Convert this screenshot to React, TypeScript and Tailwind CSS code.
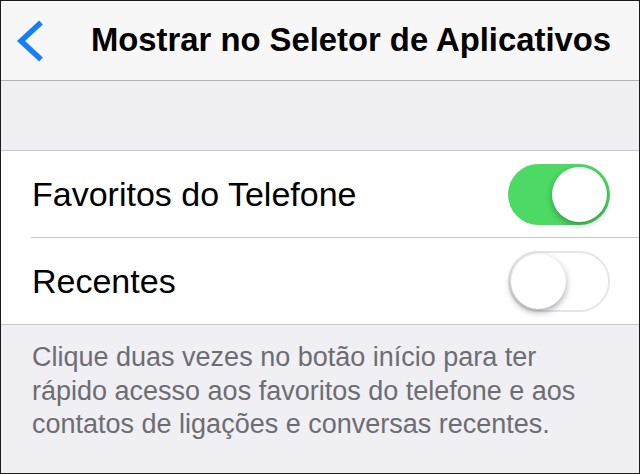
import React from "react";

function Toggle({ on }: { on: boolean }) {
  if (on) {
    return (
      <div className="relative h-[61px] w-[102px] rounded-full bg-[#4cd964]">
        <div className="absolute right-[3px] top-[3px] h-[55px] w-[55px] rounded-full bg-white shadow-[0_3px_6px_rgba(0,0,0,0.3)]" />
      </div>
    );
  }
  return (
    <div className="relative h-[61px] w-[102px] rounded-full border-2 border-[#e5e5ea] bg-white">
      <div className="absolute left-[1px] top-[1px] h-[55px] w-[55px] rounded-full bg-white shadow-[0_3px_7px_rgba(0,0,0,0.35)]" />
    </div>
  );
}

export default function App() {
  return (
    <div
      className="box-border flex h-[474px] w-[640px] flex-col overflow-hidden border border-[#1b1b1b] bg-[#efeff4]"
      style={{ fontFamily: '"Liberation Sans", Arial, sans-serif' }}
    >
      {/* nav bar */}
      <div className="flex h-[80px] shrink-0 items-center border-b border-[#b2b2b2] bg-[#f7f7f7] pl-[14px]">
        <svg width="30" height="44" viewBox="0 0 30 44" className="shrink-0">
          <path d="M26 3.5 L6 22 L26 40.5" fill="none" stroke="#157efb" strokeWidth="5.5" />
        </svg>
        <h1 className="ml-[46px] text-[32.8px] font-bold leading-none text-black">
          Mostrar no Seletor de Aplicativos
        </h1>
      </div>

      <div className="h-[70px] shrink-0 border-b border-[#c8c7cc]" />

      {/* cells */}
      <div className="shrink-0 border-b border-[#c8c7cc] bg-white">
        <div className="flex h-[86px] items-center justify-between pl-[31px] pr-[29px]">
          <span className="text-[34px] leading-none text-black">Favoritos do Telefone</span>
          <Toggle on />
        </div>
        <div className="ml-[30px] h-px bg-[#c8c7cc]" />
        <div className="flex h-[86px] items-center justify-between pl-[31px] pr-[29px]">
          <span className="text-[34px] leading-none text-black">Recentes</span>
          <Toggle on={false} />
        </div>
      </div>

      <p className="px-[31px] pt-[16px] text-[27px] leading-[33.5px] text-[#6d6d72]">
        Clique duas vezes no botão início para ter
        <br />
        rápido acesso aos favoritos do telefone e aos
        <br />
        contatos de ligações e conversas recentes.
      </p>
    </div>
  );
}
